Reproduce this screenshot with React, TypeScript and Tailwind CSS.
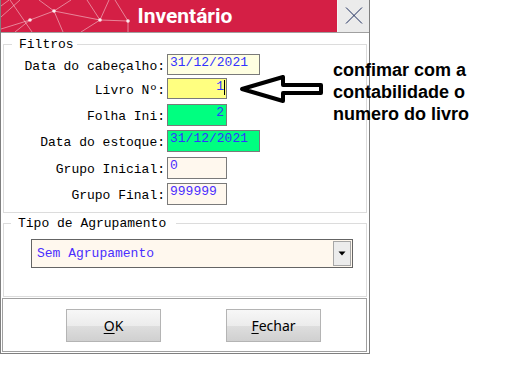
const labelCls = "w-[161px] shrink-0 pt-[5px] text-right leading-[15px] text-black whitespace-pre";

function Row(props: { label: string; top: string; h: string; children: React.ReactNode }) {
  return (
    <div className={"flex gap-[2px] " + props.top}>
      <div className={labelCls}>{props.label}</div>
      <div className={props.h}>{props.children}</div>
    </div>
  );
}

function TitlePattern() {
  const lines: [number, number, number, number][] = [
    [0, 17, 19, 0],
    [9, 0, 31, 32],
    [53, 11, 29, 20],
    [53, 11, 99, 20],
    [53, 11, 70, 0],
    [53, 11, 38, 0],
    [53, 11, 62, 32],
    [29, 20, 0, 29],
    [29, 20, 14, 32],
    [99, 20, 127, 21],
    [99, 20, 86, 0],
    [99, 20, 108, 0],
    [99, 20, 80, 32],
    [127, 21, 127, 32],
    [127, 21, 114, 0],
    [0, 6, 8, 0],
  ];
  return (
    <svg className="absolute left-0 top-0" width="140" height="32" viewBox="0 0 140 32">
      {lines.map((l, i) => (
        <line key={i} x1={l[0]} y1={l[1]} x2={l[2]} y2={l[3]} stroke="rgba(255,255,255,0.45)" strokeWidth="1" />
      ))}
      {[
        [53, 11],
        [29, 20],
        [99, 20],
        [127, 21],
      ].map((p, i) => (
        <circle key={i} cx={p[0]} cy={p[1]} r="1.8" fill="rgba(255,255,255,0.85)" />
      ))}
    </svg>
  );
}

export default function App() {
  return (
    <div className="relative h-[369px] w-[507px] bg-white font-['Liberation_Mono',monospace] text-[13px]">
      <div className="flex h-[354px] w-[370px] flex-col border-x border-b border-[#7f7f7f]">
        {/* title bar */}
        <div className="flex h-[33px] shrink-0 border-b border-[#a0a0a0]">
          <div className="relative flex flex-1 items-center justify-center overflow-hidden bg-[#d41f45] pl-[32px]">
            <TitlePattern />
            <span className="relative font-['Roboto','Liberation_Sans',sans-serif] text-[21px] font-bold leading-none text-white">
              Inventário
            </span>
          </div>
          <div className="relative w-[32px] border-l border-[#f4f4f4] bg-[#ebebeb]">
            <svg className="absolute left-0 top-0" width="32" height="32" viewBox="0 0 32 32">
              <line x1="8" y1="7.5" x2="24" y2="23.5" stroke="#1c2c5c" strokeWidth="1" />
              <line x1="24" y1="7.5" x2="8" y2="23.5" stroke="#1c2c5c" strokeWidth="1" />
            </svg>
          </div>
        </div>

        {/* Filtros */}
        <fieldset className="mx-[2px] mt-[4px] h-[176px] border border-[#dcdcdc]">
          <legend className="ml-[8px] pl-[7px] pr-[3px] leading-[15px] text-black">Filtros</legend>
          <Row label="Data do cabeçalho:" top="mt-[2px]" h="h-[21px]">
            <div className="h-full w-[93px] border border-[#7a7a7a] bg-[#ffffe1] pl-[2px] leading-[15px] text-[#3333ff]">
              31/12/2021
            </div>
          </Row>
          <Row label="Livro Nº:" top="mt-[3px]" h="h-[21px]">
            <div className="flex h-full w-[60px] items-start justify-end border border-[#7a7a7a] bg-[#ffff80] pr-[1px] leading-[15px] text-[#3333ff]">
              <span>1</span>
              <span className="mt-[1px] h-[15px] w-[1px] bg-black" />
            </div>
          </Row>
          <Row label="Folha Ini:" top="mt-[5px]" h="h-[22px]">
            <div className="h-full w-[60px] border border-[#7a7a7a] bg-[#00ff80] pr-[2px] text-right leading-[15px] text-[#3333ff]">
              2
            </div>
          </Row>
          <Row label="Data do estoque:" top="mt-[4px]" h="h-[22px]">
            <div className="h-full w-[93px] border border-[#7a7a7a] bg-[#00ff80] pl-[2px] leading-[15px] text-[#3333ff]">
              31/12/2021
            </div>
          </Row>
          <Row label="Grupo Inicial:" top="mt-[5px]" h="h-[22px]">
            <div className="h-full w-[60px] border border-[#7a7a7a] bg-[#fff8ee] pl-[2px] leading-[15px] text-[#4a2dff]">
              0
            </div>
          </Row>
          <Row label="Grupo Final:" top="mt-[4px]" h="h-[22px]">
            <div className="h-full w-[60px] border border-[#7a7a7a] bg-[#fff8ee] pl-[2px] leading-[15px] text-[#4a2dff]">
              999999
            </div>
          </Row>
        </fieldset>

        {/* Tipo de Agrupamento */}
        <fieldset className="mx-[2px] mt-[3px] h-[81px] border border-[#dcdcdc]">
          <legend className="ml-[7px] pl-[7px] pr-[10px] leading-[15px] text-black">Tipo de Agrupamento</legend>
          <div className="ml-[27px] mt-[8px] flex h-[29px] w-[322px] border border-[#646464] bg-[#fff8ee] p-[1px]">
            <div className="flex flex-1 items-center pl-[4px] text-[#4a2dff]">Sem Agrupamento</div>
            <div className="flex w-[18px] items-center justify-center border border-[#a6a6a6] bg-[#ececec]">
              <svg width="8" height="5" viewBox="0 0 8 5">
                <path d="M0.5 0.5 L7.5 0.5 L4 4.5 Z" fill="#000" />
              </svg>
            </div>
          </div>
        </fieldset>

        {/* buttons */}
        <div className="ml-[1px] mr-[2px] mt-[1px] flex h-[54px] gap-[65px] border border-[#a0a0a0] pl-[63px] pt-[10px] font-['Noto_Sans',sans-serif] text-[14px] text-black">
          <div className="flex h-[33px] w-[95px] items-center justify-center border border-[#b4b4b4] bg-[linear-gradient(to_bottom,#f7f7f7_0%,#ececec_50%,#dedede_51%,#d0d0d0_100%)]">
            <span>
              <span className="underline underline-offset-2">O</span>K
            </span>
          </div>
          <div className="flex h-[33px] w-[95px] items-center justify-center border border-[#b4b4b4] bg-[linear-gradient(to_bottom,#f7f7f7_0%,#ececec_50%,#dedede_51%,#d0d0d0_100%)]">
            <span>
              <span className="underline underline-offset-2">F</span>echar
            </span>
          </div>
        </div>
      </div>

      {/* annotation arrow */}
      <svg className="absolute left-0 top-0" width="507" height="369" viewBox="0 0 507 369">
        <polygon
          points="242,89 283,77 283,85 321,85 321,93 283,93 283,101"
          fill="#fff"
          stroke="#000"
          strokeWidth="4"
          strokeLinejoin="round"
        />
      </svg>
      <div className="absolute left-[333px] top-[59px] font-['Liberation_Sans',Arial,sans-serif] text-[18px] font-bold leading-[22px] text-black">
        <div>confimar com a</div>
        <div>contabilidade o</div>
        <div>numero do livro</div>
      </div>
    </div>
  );
}
